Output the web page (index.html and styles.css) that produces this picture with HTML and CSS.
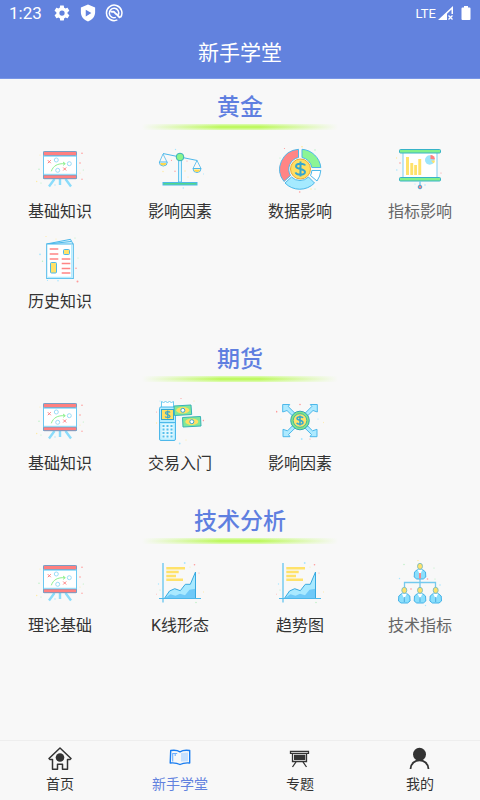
FILE: index.html
```
<!DOCTYPE html>
<html lang="zh-CN">
<head>
    <meta charset="UTF-8">
    <meta name="viewport" content="width=device-width, initial-scale=1.0">
    <title>新手学堂</title>
    <link rel="stylesheet" href="styles.css">
</head>
<body>

    <!-- 图标定义 -->
    <svg class="icon-defs" aria-hidden="true">
        <symbol id="icon-board" viewBox="0 0 48 48">
            <g fill="none" stroke="#8bdcfb" stroke-width="2.4"><path d="M18.5 33L13 40.5M24 33v6M29.5 33L35 40.5"/></g>
            <rect x="7.5" y="6" width="33" height="26.500" fill="#fff" stroke="#6cc8f2"/>
            <rect x="7.5" y="5.500" width="33" height="4" rx="1" fill="#ff8080" stroke="#6f9cc4" stroke-width=".9"/>
            <rect x="7.5" y="29" width="33" height="3.700" rx="1" fill="#ff8080" stroke="#6f9cc4" stroke-width=".9"/>
            <path d="M8 10.300h32M8 28.300h32" stroke="#8fdcfa"/>
            <g fill="none" stroke="#9adcf8"><circle cx="20.300" cy="14" r="2"/><circle cx="33.300" cy="17.700" r="2"/><circle cx="21.700" cy="24.300" r="2"/></g>
            <path d="M11.800 14.200l3 3m0-3l-3 3M27.200 21.500l3 3m0-3l-3 3" stroke="#ff8080"/>
            <path d="M15.300 25.300c2-5.500 6-8 13.700-7.600m-2-1.700l2.300 1.700-2.300 1.700" fill="none" stroke="#8ef08e"/>
            <g fill="#ff9b9b"><circle cx="46" cy="7.300" r=".8"/><circle cx="44" cy="17" r=".8"/><circle cx="46" cy="33.300" r=".7"/></g>
            <g fill="#b5efc0"><circle cx="3" cy="23.300" r=".7"/><circle cx="47.300" cy="24" r=".6"/><circle cx="5" cy="37" r=".6"/></g>
            <g fill="#ffe9a0"><circle cx="0.700" cy="35.500" r=".7"/><circle cx="4" cy="9" r=".5"/><circle cx="44" cy="27" r=".5"/></g>
            <circle cx="19" cy="39" r=".7" fill="#a8e6ff"/>
        </symbol>
        <symbol id="icon-scale" viewBox="0 0 48 48">
            <path d="M7 7.500L24 11l17.300 3.500" fill="none" stroke="#4db8ea"/>
            <path d="M7 8L3.500 16M7 8l4 8M41 14.500l-4 8M41 14.500l4 8" stroke="#4db8ea" stroke-width=".8"/>
            <rect x="22.500" y="14" width="3" height="22" fill="#d4f4ff" stroke="#4db8ea" stroke-width=".8"/>
            <path d="M3.300 16h8a4 4 0 0 1-8 0zM37 22.500h8a4 4 0 0 1-8 0z" fill="#fff" stroke="#4db8ea"/>
            <path d="M4.300 17h6a3 2.500 0 0 1-6 0zM38 23.500h6a3 2.500 0 0 1-6 0z" fill="#ffd84d"/>
            <circle cx="24" cy="11" r="3.800" fill="#8cf58c" stroke="#36b3b8"/>
            <rect x="7" y="36.500" width="34" height="2.500" fill="#52d88b" stroke="#4db8ea"/>
            <g fill="#ff9b9b"><circle cx="15.500" cy="14.300" r=".6"/><circle cx="31" cy="15" r=".6"/><circle cx="19" cy="25.300" r=".7"/></g>
            <g fill="#a8e6ff"><circle cx="19.500" cy="3.500" r=".7"/><circle cx="48" cy="28" r=".8"/><circle cx="27.300" cy="42" r=".8"/></g>
            <g fill="#ffe9a0"><circle cx="7" cy="25.500" r=".7"/><circle cx="29" cy="25" r=".7"/><circle cx="32" cy="31" r=".6"/></g>
        </symbol>
        <symbol id="icon-donut" viewBox="0 0 48 48">
            <g stroke="#4db8ea">
                <path d="M22.500 3.300A20.500 20 0 0 0 8 35.500l6.500-6A12 12 0 0 1 22.500 11.500z" fill="#ff8585"/>
                <path d="M26 3.300A20.500 20.500 0 0 1 44.800 21.500h-9A12 12 0 0 0 26 11.500z" fill="#8cf595"/>
                <path d="M44.800 24.500A20.500 20.500 0 0 1 41 35l-6.500-5.500a12 12 0 0 0 1.300-5z" fill="#fff"/>
                <path d="M9 37l6.500-6a12 12 0 0 0 17 0l6 6a20.500 20.500 0 0 1-29.500 0z" fill="#a5eaff"/>
            </g>
            <circle cx="24.500" cy="23" r="10" fill="#ffdf62" stroke="#e8a83c"/>
            <path d="M29 19.500c-.5-2-9-3-9 .7 0 3.300 9 2.300 9 5.800 0 3.800-9 3-9.300.3M24.500 15.500v15" fill="none" stroke="#35a6cf" stroke-width="2"/>
            <g fill="#ff9b9b"><circle cx="8.500" cy="2.500" r=".6"/><circle cx="-.5" cy="24" r=".7"/><circle cx="23.700" cy="46" r=".8"/></g>
            <g fill="#ffe9a0"><circle cx="26" cy="0.700" r=".8"/><circle cx="35" cy="43" r=".7"/></g>
            <g fill="#b5efc0"><circle cx="39" cy="4" r=".7"/><circle cx="4" cy="12" r=".6"/><circle cx="39" cy="43" r=".6"/></g>
        </symbol>
        <symbol id="icon-chart-board" viewBox="0 0 48 48">
            <rect x="7" y="6" width="34" height="27" fill="#fff" stroke="#7fcdf0"/>
            <rect x="3.500" y="3.500" width="41" height="3.500" rx="1" fill="#82f08c" stroke="#36b3c8"/>
            <rect x="3.500" y="31.500" width="41" height="3.500" rx="1" fill="#82f08c" stroke="#36b3c8"/>
            <path d="M10 11h3v18h-3zM14.300 17h2.900v12h-2.900zM18.200 19h2.800v10h-2.800zM22.300 13h2.900v16h-2.900z" fill="#ffe26a"/>
            <circle cx="33.700" cy="14" r="4.700" fill="#9ce5fb"/>
            <path d="M34.500 13V9a4.500 4.500 0 0 1 4.500 4.500z" fill="#ff8080"/>
            <path d="M35 14.500h4a4 4 0 0 1-1.500 3z" fill="#ffe26a"/>
            <path d="M24 35.500v4" stroke="#4db8ea"/>
            <circle cx="24" cy="41" r="1.800" fill="#ff8585" stroke="#4d9fd0"/>
            <g fill="#ff9b9b"><circle cx="4" cy="17" r=".8"/><circle cx="45" cy="27" r=".6"/></g>
            <g fill="#ffe9a0"><circle cx="0.500" cy="12" r=".7"/><circle cx="49" cy="35" r=".7"/></g>
            <g fill="#a8e6ff"><circle cx="0.800" cy="24" r=".8"/><circle cx="29" cy="39" r=".8"/><circle cx="19" cy="38" r=".6"/></g>
        </symbol>
        <symbol id="icon-news" viewBox="0 0 48 48">
            <path d="M10.500 8L34.500 3.300 37 8M12 8l23-2.500" fill="#d9f5ff" stroke="#4db8ea"/>
            <rect x="10.700" y="8" width="26.600" height="34.500" fill="#fff" stroke="#4db8ea"/>
            <path d="M35.800 9v32.500H11.500" fill="none" stroke="#b5ecff" stroke-width="1.500"/>
            <path d="M13.700 13h8.600M13.700 18h8.600M13.700 23h8.600M25.700 23h8.600M25.700 27.500h8.600M25.700 32.500h8.600M25.700 37h8.600" stroke="#ff8585" stroke-width="1.300"/>
            <rect x="27.500" y="13.500" width="6" height="5" rx="1" fill="#ffe26a" stroke="#4db8ea"/>
            <rect x="14.500" y="26.500" width="6" height="10.500" rx="1" fill="#ffe26a" stroke="#4db8ea"/>
            <g fill="#ff9b9b"><circle cx="40" cy="32.300" r=".8"/><circle cx="41.500" cy="45.500" r="1"/></g>
            <g fill="#ffe9a0"><circle cx="10" cy="0" r=".8"/><circle cx="20" cy="3" r=".5"/></g>
            <g fill="#a8e6ff"><circle cx="4" cy="18.300" r=".9"/><circle cx="22" cy="44.800" r=".8"/><circle cx="11.500" cy="44.500" r=".6"/></g>
            <g fill="#b5efc0"><circle cx="6.500" cy="25.300" r=".7"/><circle cx="39" cy="2" r=".6"/><circle cx="42" cy="22" r=".5"/></g>
        </symbol>
        <symbol id="icon-pos" viewBox="0 0 48 48">
            <path d="M5.500 10V3.500l2 1 2-1 2 1 2-1 2 1 2-1V10z" fill="#fff" stroke="#6ccbf0"/>
            <rect x="3.500" y="9" width="16" height="33.500" rx="1.500" fill="#b5ecff" stroke="#4db8ea"/>
            <rect x="5.500" y="26" width="12" height="14.500" fill="#e3f8ff"/>
            <path d="M3.500 24.500h16" stroke="#4db8ea"/>
            <rect x="5.500" y="11.500" width="12" height="10" fill="#ffdf62" stroke="#35a6cf"/>
            <path d="M14 14.500c-.5-1.300-4.500-1.300-4.500.5 0 2 4.500 1.200 4.500 3.200 0 1.800-4.500 1.500-4.800.3M11.700 12.500v8" fill="none" stroke="#35a6cf" stroke-width="1.200"/>
            <path d="M6.500 28h10.500M6.500 31.500h10.500M6.500 35h10.500M6.500 38.500h10.500" stroke="#57bfec" stroke-width="1.800" stroke-dasharray="2 2"/>
            <g stroke="#36b3b8">
                <path d="M18 8l17-1 .7 9.500L18.500 17.500z" fill="#82e896"/>
                <path d="M26.500 19.500l18-1 .5 9.500-18 1z" fill="#82e896"/>
            </g>
            <ellipse cx="26.800" cy="12.300" rx="6.500" ry="3.200" fill="#ffdf62"/>
            <ellipse cx="35.800" cy="23.700" rx="6.500" ry="3.200" fill="#ffdf62"/>
            <circle cx="26.800" cy="12.300" r="2" fill="#fff" stroke="#35a6cf"/>
            <circle cx="35.800" cy="23.700" r="2" fill="#fff" stroke="#35a6cf"/>
            <g fill="#ff9b9b"><circle cx="25" cy="0" r=".8"/><circle cx="47.500" cy="22.500" r=".8"/><circle cx="0.500" cy="14" r=".5"/></g>
            <g fill="#a8e6ff"><circle cx="23.700" cy="45.500" r=".9"/><circle cx="4" cy="3" r=".6"/></g>
            <g fill="#ffe9a0"><circle cx="0.500" cy="25" r=".7"/><circle cx="30" cy="42" r=".6"/><circle cx="38" cy="3" r=".6"/></g>
        </symbol>
        <symbol id="icon-arrows" viewBox="0 0 48 48">
            <g fill="#aeeaff" stroke="#4db8ea">
                <path d="M6.700 6.500h7l-1.500 2L36.500 32.800l4.500-1.500v7.400h-7l1.500-2.200L11 12.500l-4.300 1.500z"/>
                <path d="M41.300 6.500h-7l1.500 2L11.500 32.800 7 31.300v7.400h7l-1.500-2.200L37 12.500l4.300 1.500z"/>
            </g>
            <circle cx="24" cy="22.500" r="9.300" fill="#7de58b" stroke="#36a6b0"/>
            <circle cx="24" cy="22.500" r="6.800" fill="#ffe26a" stroke="#45b5a0"/>
            <path d="M27 20c-.5-1.500-6-1.700-6 .5 0 2.200 6 1.500 6 4s-5.700 2-6.200.3M24 17.500v10" fill="none" stroke="#35a6cf" stroke-width="1.500"/>
            <g fill="#ff9b9b"><circle cx="24" cy="6.500" r=".8"/><circle cx="0.500" cy="13.700" r=".9"/><circle cx="34" cy="41" r=".6"/></g>
            <g fill="#ffe9a0"><circle cx="48" cy="24.500" r=".8"/><circle cx="5" cy="21" r=".6"/></g>
            <g fill="#a8e6ff"><circle cx="25.700" cy="41" r=".9"/><circle cx="42" cy="21" r=".6"/></g>
        </symbol>
        <symbol id="icon-trend" viewBox="0 0 48 48">
            <path d="M7 3v39.500" stroke="#7fcdf0" stroke-width="1.600"/>
            <path d="M10.300 8.300H29M10.300 12h12.400M10.300 16h9.700M10.300 19.700H27" stroke="#ffe26a" stroke-width="2.400"/>
            <path d="M8.500 38.300l5-7.300 5.200-2.300 5.600 2L29.300 24.300h5L39.500 12v26.300z" fill="#a9e9ff"/>
            <path d="M8.500 38.300l6-4 5 1.500 4.500-2 5 1.500 4.500-5.500 6-1v9.500z" fill="#6fc9f8"/>
            <path d="M8.500 38.300l5-7.300 5.200-2.300 5.600 2L29.300 24.300h5L39.500 12v26.300" fill="none" stroke="#38a9e0"/>
            <path d="M3 38.500h42" stroke="#4db8ea"/>
            <g fill="#ff9b9b"><circle cx="38.500" cy="4.700" r=".8"/><circle cx="-.3" cy="34.300" r=".8"/><circle cx="43" cy="13" r=".5"/></g>
            <g fill="#a8e6ff"><circle cx="28.700" cy="3" r=".9"/><circle cx="2.500" cy="24" r=".7"/></g>
            <g fill="#ffe9a0"><circle cx="48" cy="32" r=".8"/><circle cx="34" cy="7" r=".5"/></g>
            <g fill="#b5efc0"><circle cx="40" cy="42.500" r=".7"/><circle cx="4" cy="30" r=".6"/></g>
        </symbol>
        <symbol id="icon-team" viewBox="0 0 48 48">
            <path d="M24 19v13M8.500 32v-9.500h31V32" fill="none" stroke="#74c9ee" stroke-width="1.300"/>
            <g id="team-person">
                <path d="M18.500 12l3-2.500h5l3 2.500.3 5-2.500 2h-6.600l-2.500-2z" fill="#8adffc" stroke="#45b2e8"/>
                <path d="M21.500 9.500L24 15l2.500-5.500z" fill="#fff"/>
                <ellipse cx="24" cy="6.300" rx="2.500" ry="3" fill="#ffe26a" stroke="#6cb5c0" stroke-width=".8"/>
            </g>
            <path d="M24 13v5.500" stroke="#ff8080" stroke-width="1.800"/>
            <use href="#team-person" x="-15.700" y="24"/>
            <use href="#team-person" y="24"/>
            <use href="#team-person" x="15.700" y="24"/>
            <path d="M8.300 37v5M24 37v5M39.700 37v5" stroke="#4fa9dd"/>
            <g fill="#ff9b9b"><circle cx="31.500" cy="19" r=".8"/><circle cx="15" cy="29" r=".8"/></g>
            <g fill="#a8e6ff"><circle cx="3.500" cy="18.500" r=".7"/><circle cx="44" cy="25" r=".8"/><circle cx="29.500" cy="45.500" r=".7"/></g>
            <g fill="#b5efc0"><circle cx="8" cy="4.500" r=".7"/><circle cx="38" cy="8" r=".6"/><circle cx="39" cy="19" r=".6"/></g>
            <circle cx="22" cy="0.500" r=".7" fill="#ffe9a0"/>
        </symbol>
    </svg>

    <header class="header">
        <!-- 状态栏 -->
        <div class="status-bar">
            <span class="status-time">1:23</span>
            <svg class="status-icon" viewBox="0 0 24 24"><path fill="#fff" fill-rule="evenodd" d="M19.400 13a7 7 0 0 0 0-2l2.100-1.600c.2-.2.300-.4.100-.7l-2-3.400c-.1-.3-.4-.3-.6-.2l-2.500 1a7 7 0 0 0-1.700-1L14.400 2.400c0-.2-.2-.4-.5-.4h-4c-.2 0-.4.200-.5.400L9 5.100a7 7 0 0 0-1.700 1l-2.500-1c-.2-.1-.5 0-.6.200l-2 3.400c-.1.300-.1.500.1.700L4.500 11a7 7 0 0 0 0 2l-2.100 1.600c-.2.200-.3.400-.1.700l2 3.400c.1.300.4.300.6.200l2.500-1a7 7 0 0 0 1.700 1l.4 2.700c0 .2.200.4.500.4h4c.2 0 .4-.2.500-.4l.4-2.700a7 7 0 0 0 1.700-1l2.500 1c.2.100.5 0 .6-.2l2-3.400c.1-.3.100-.5-.1-.7zM12 15.500a3.500 3.500 0 1 1 0-7 3.500 3.500 0 0 1 0 7z"/></svg>
            <svg class="status-icon" viewBox="0 0 24 24"><path fill="#fff" fill-rule="evenodd" d="M12 .8L2.500 4.500V11c0 5.800 4 10.600 9.500 12.200 5.500-1.600 9.500-6.400 9.500-12.200V4.500zM9 7.500l7.500 4.500L9 16.500z"/></svg>
            <svg class="status-icon" viewBox="0 0 24 24"><g fill="none" stroke="#fff" stroke-width="2"><path d="M16.500 21.200A10.300 10.300 0 1 1 20.500 18"/><path d="M17.800 14.500a6.300 6.300 0 1 0-3.300 3.300"/><path d="M7.500 9.500c2 2.500 3.500-.5 5 1.500s2 2.500 3.500 3l4 4.500" stroke-width="2.600"/></g></svg>
            <span class="status-net">LTE</span>
            <svg class="status-signal" viewBox="0 0 16 16"><path fill="#fff" fill-rule="evenodd" d="M0 15L15 1v8h-1.500V4.500L9 8.700V15z"/><path d="M10.500 10.500l4 4m0-4l-4 4" stroke="#fff" stroke-width="1.300"/></svg>
            <svg class="status-battery" viewBox="0 0 10 16"><path fill="#fff" d="M3 1h4v1.500h1.500q1 0 1 1V14q0 1-1 1h-7q-1 0-1-1V3.500q0-1 1-1H3z"/></svg>
        </div>
        <h1 class="header-title">新手学堂</h1>
    </header>

    <main class="content">
        <!-- 黄金 -->
        <section class="section">
            <h2 class="section-title">黄金</h2>
            <div class="grid">
                <a class="item" href="#"><svg class="item-icon"><use href="#icon-board"/></svg>基础知识</a>
                <a class="item" href="#"><svg class="item-icon"><use href="#icon-scale"/></svg>影响因素</a>
                <a class="item" href="#"><svg class="item-icon"><use href="#icon-donut"/></svg>数据影响</a>
                <a class="item item-muted" href="#"><svg class="item-icon"><use href="#icon-chart-board"/></svg>指标影响</a>
                <a class="item" href="#"><svg class="item-icon"><use href="#icon-news"/></svg>历史知识</a>
            </div>
        </section>

        <!-- 期货 -->
        <section class="section">
            <h2 class="section-title">期货</h2>
            <div class="grid">
                <a class="item" href="#"><svg class="item-icon"><use href="#icon-board"/></svg>基础知识</a>
                <a class="item" href="#"><svg class="item-icon"><use href="#icon-pos"/></svg>交易入门</a>
                <a class="item" href="#"><svg class="item-icon"><use href="#icon-arrows"/></svg>影响因素</a>
            </div>
        </section>

        <!-- 技术分析 -->
        <section class="section">
            <h2 class="section-title">技术分析</h2>
            <div class="grid">
                <a class="item" href="#"><svg class="item-icon"><use href="#icon-board"/></svg>理论基础</a>
                <a class="item" href="#"><svg class="item-icon"><use href="#icon-trend"/></svg>K线形态</a>
                <a class="item" href="#"><svg class="item-icon"><use href="#icon-trend"/></svg>趋势图</a>
                <a class="item item-muted" href="#"><svg class="item-icon"><use href="#icon-team"/></svg>技术指标</a>
            </div>
        </section>
    </main>

    <!-- 底部导航 -->
    <nav class="tabbar">
        <a class="tab" href="#">
            <svg class="tab-icon" viewBox="0 0 24 24"><path d="M4.500 13.500H2L1 12.500 12 2l11 10.500-1 1h-2.500v9.700h-5v-5h-5v5h-5z" fill="none" stroke="#333" stroke-width="1.500" stroke-linejoin="round"/><circle cx="12" cy="11.500" r="4.300" fill="#333"/></svg>
            首页
        </a>
        <a class="tab tab-active" href="#">
            <svg class="tab-icon" viewBox="0 0 24 24"><path d="M13 7l7-.5v8.700l-7 .3z" fill="#c5e0ff"/><path d="M12 5.800C9.500 4.200 6 4 2.700 4.500L2.200 17c3.500-.3 7 0 9.800 1.500 2.800-1.500 6-1.800 9.700-1.500V4.500C18 4 14.500 4.200 12 5.800z" fill="none" stroke="#1a7df0" stroke-width="1.400" stroke-linejoin="round"/><path d="M4.700 15.500v-8h2.500v2.500M7.200 7.500h2" fill="none" stroke="#6cafff" stroke-width="1.100"/></svg>
            新手学堂
        </a>
        <a class="tab" href="#">
            <svg class="tab-icon" viewBox="0 0 24 24"><path d="M2.500 5.300h18v2h-18zM4.500 7.300v8.200h14V7.300M8 16l-3.500 5M15 16l3.500 5" fill="none" stroke="#333" stroke-width="1.300"/><path d="M6 8.700h11.300v5.300H6z" fill="#333"/></svg>
            专题
        </a>
        <a class="tab" href="#">
            <svg class="tab-icon" viewBox="0 0 24 24"><circle cx="11.500" cy="8.300" r="6.500" fill="#333"/><path d="M2.500 23c.5-11.500 17.500-11.500 18 0" fill="none" stroke="#333" stroke-width="1.800"/></svg>
            我的
        </a>
    </nav>

</body>
</html>
```
FILE: styles.css
```
* { box-sizing: border-box; }
body {
    display: flex;
    flex-direction: column;
    min-height: 100vh;
    margin: 0;
    background-color: #f8f8f8;
    color: #333;
    font-family: Roboto, "Noto Sans CJK SC", sans-serif;
}
a { color: inherit; text-decoration: none; }
.icon-defs { position: absolute; width: 0; height: 0; }

/* 顶部 */
.header { background-color: #6282de; color: #fff; border-bottom: 1px solid #7996e6; }
.status-bar { display: flex; align-items: center; height: 26px; padding: 0 9px; }
.status-time { width: 44px; font-size: 17px; }
.status-icon { width: 18px; height: 18px; margin-right: 8px; }
.status-icon:nth-of-type(3) { margin-right: auto; }
.status-net { font-size: 13px; }
.status-signal { width: 16px; height: 16px; margin: 0 7px 0 2px; }
.status-battery { width: 10px; height: 16px; }
.header-title { margin: 0; padding-top: 2px; font-size: 21px; font-weight: normal; line-height: 50px; text-align: center; }

/* 内容 */
.content { flex: 1; }
.section { padding: 10px 0; }
.section-title {
    position: relative;
    margin: 0;
    padding-bottom: 14px;
    color: #5f7fe0;
    font-size: 23px;
    font-weight: 500;
    line-height: 38px;
    text-align: center;
}
.section-title::after {
    content: "";
    position: absolute;
    left: 50%;
    top: 35px;
    width: 196px;
    height: 6px;
    margin-left: -98px;
    background: linear-gradient(to right, #f8f8f8, transparent 40%, transparent 60%, #f8f8f8), linear-gradient(#dffbb8, #b8f850 50%, #dffbb8);
}
.grid { display: grid; grid-template-columns: repeat(4, 1fr); }
.item {
    display: flex;
    flex-direction: column;
    align-items: center;
    height: 90px;
    padding-top: 5px;
    font-size: 16px;
    line-height: 24px;
}
.item-muted { color: #666; }
.item-icon { width: 48px; height: 48px; margin-bottom: 6px; overflow: visible; }
.item-icon symbol { overflow: visible; }

/* 底部导航 */
.tabbar {
    position: sticky;
    bottom: 0;
    display: flex;
    height: 60px;
    padding-top: 5px;
    background-color: #f8f8f8;
    border-top: 1px solid #eee;
}
.tab {
    flex: 1;
    display: flex;
    flex-direction: column;
    align-items: center;
    font-size: 14px;
    line-height: 20px;
}
.tab-active { color: #6282de; }
.tab-icon { width: 24px; height: 24px; margin-bottom: 4px; }
```
